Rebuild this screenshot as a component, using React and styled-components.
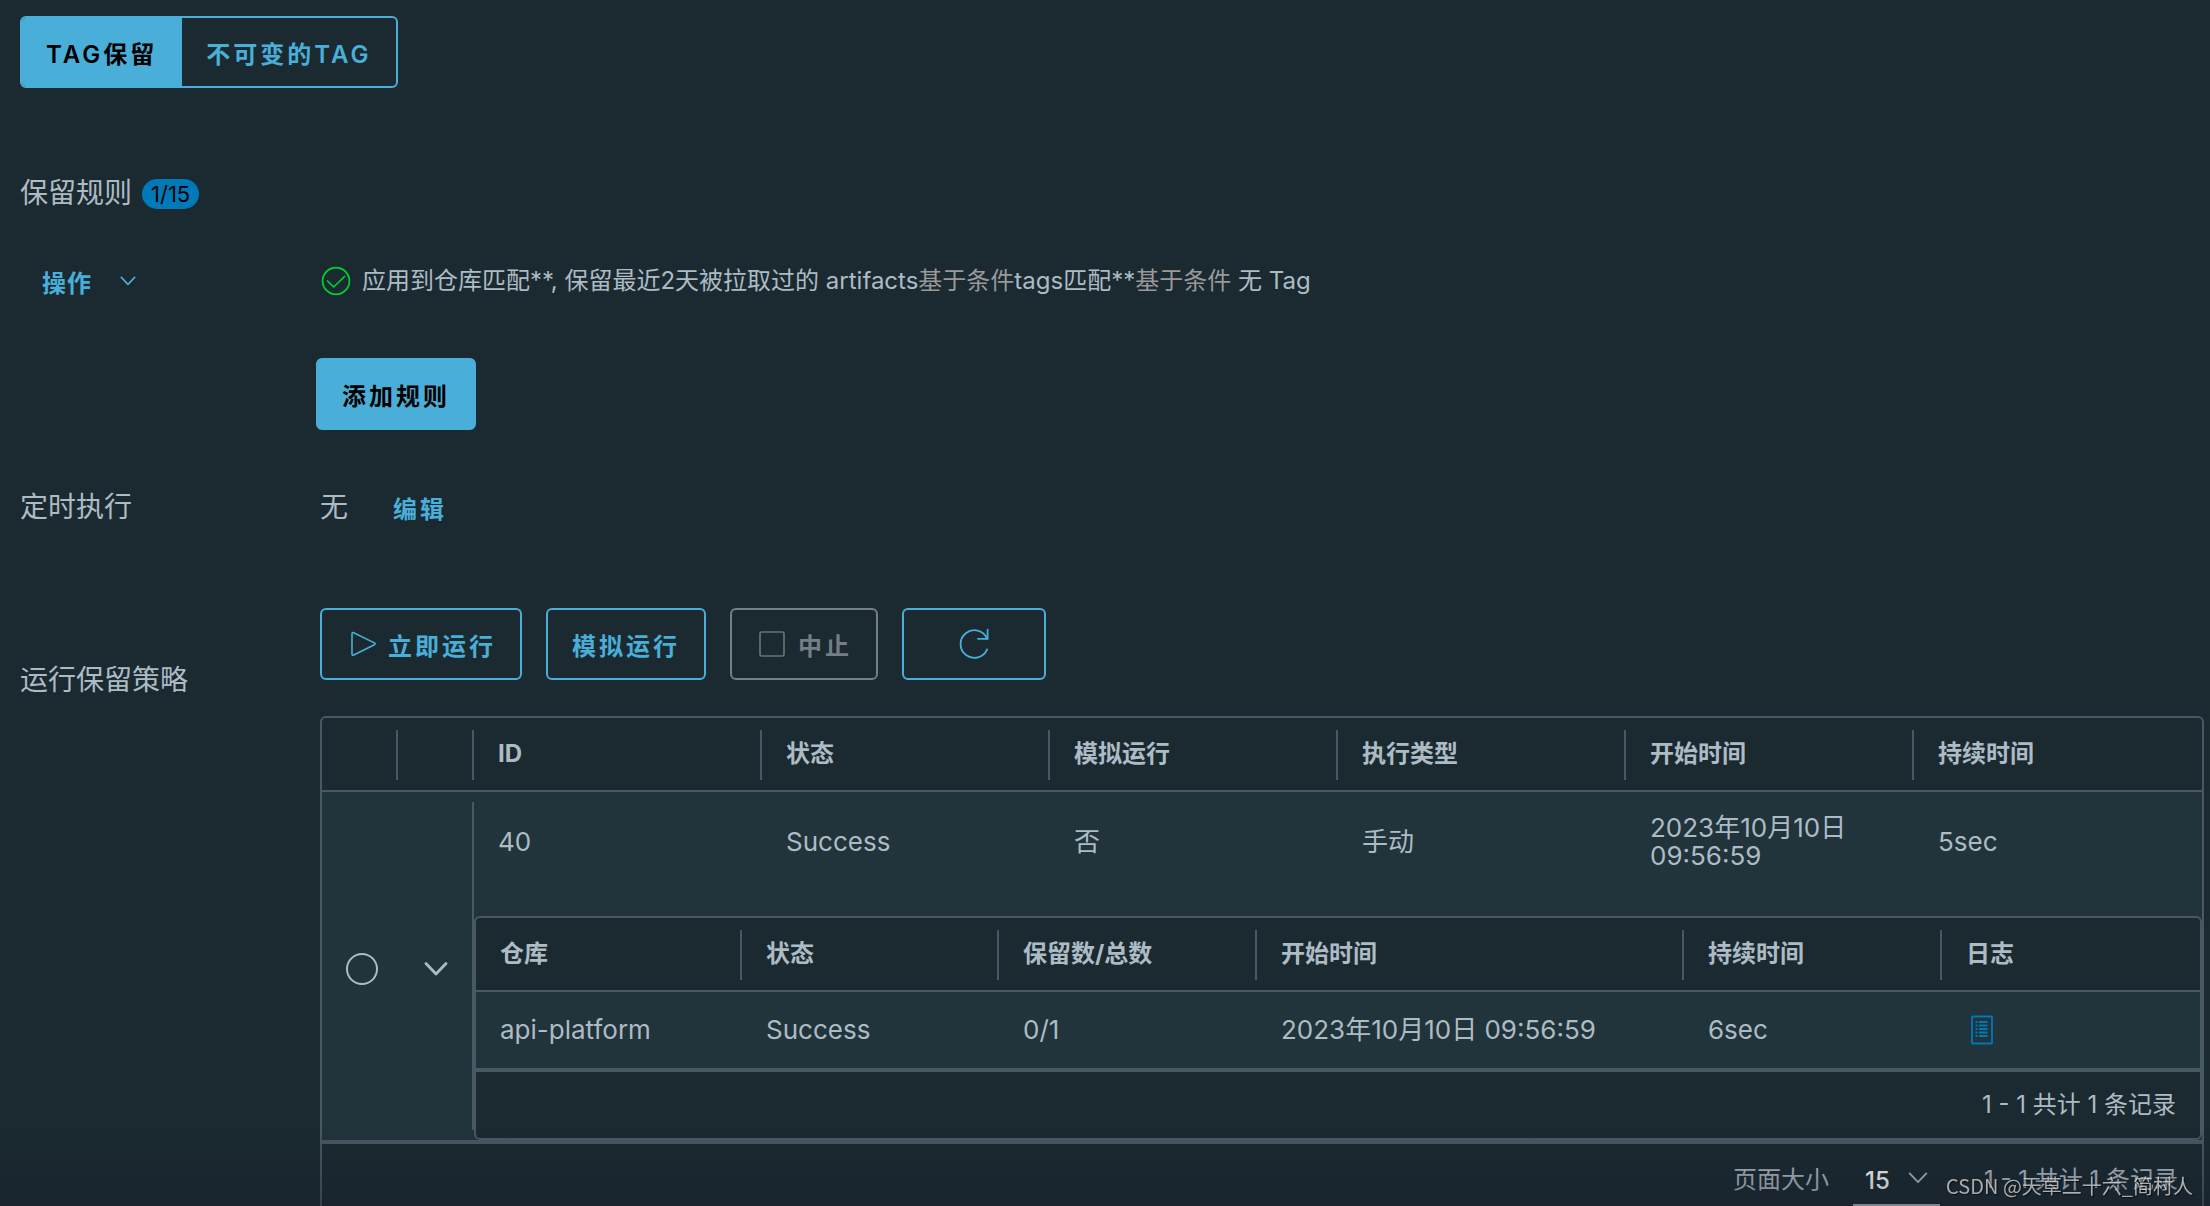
import React, { useState } from "react";
import styled, { createGlobalStyle } from "styled-components";

const ruleColumns = ["ID", "状态", "模拟运行", "执行类型", "开始时间", "持续时间"];

const taskColumns = [
  { name: "仓库", width: 266 },
  { name: "状态", width: 257 },
  { name: "保留数/总数", width: 258 },
  { name: "开始时间", width: 427 },
  { name: "持续时间", width: 258 },
  { name: "日志", width: 258 },
];

const taskTotal = taskColumns.reduce((sum, c) => sum + c.width, 0);

const execution = {
  id: "40",
  status: "Success",
  dryRun: "否",
  trigger: "手动",
  start: "2023年10月10日 09:56:59",
  duration: "5sec",
};

const task = {
  repo: "api-platform",
  status: "Success",
  count: "0/1",
  start: "2023年10月10日 09:56:59",
  duration: "6sec",
};

const AngleIcon = ({ size, weight }) => (
  <svg width={size} height={size} viewBox="0 0 24 24" fill="none" aria-hidden="true">
    <path
      d="M2 6.5 L12 17 L22 6.5"
      stroke="currentColor"
      strokeWidth={weight}
      strokeLinecap="round"
      strokeLinejoin="round"
    />
  </svg>
);

const CheckCircleIcon = () => (
  <svg width="30" height="30" viewBox="0 0 30 30" fill="none" aria-hidden="true">
    <circle cx="15" cy="15" r="13.4" stroke="#00d42e" strokeWidth="1.7" />
    <path
      d="M6.5 15 L12.7 21 L23.5 10.5"
      stroke="#00d42e"
      strokeWidth="1.7"
      strokeLinecap="round"
      strokeLinejoin="round"
    />
  </svg>
);

const PlayIcon = () => (
  <svg width="32" height="32" viewBox="0 0 32 32" fill="none" aria-hidden="true">
    <path
      d="M6 5.8 Q6 3.9 7.7 4.7 L28.4 14.9 Q30 15.8 28.4 16.7 L7.7 27 Q6 27.8 6 26 Z"
      stroke="currentColor"
      strokeWidth="1.6"
    />
  </svg>
);

const StopIcon = () => (
  <svg width="32" height="32" viewBox="0 0 32 32" fill="none" aria-hidden="true">
    <rect x="4" y="4" width="24" height="24" rx="1.5" stroke="currentColor" strokeWidth="1.7" opacity="0.85" />
  </svg>
);

const RefreshIcon = () => (
  <svg width="36" height="36" viewBox="0 0 36 36" fill="none" aria-hidden="true">
    <path
      d="M31.1 23.4 A13.8 13.8 0 1 1 31 12.5"
      stroke="currentColor"
      strokeWidth="1.8"
      strokeLinecap="round"
    />
    <path d="M31.6 3.6 V12.8 H22" stroke="currentColor" strokeWidth="1.8" strokeLinecap="round" />
  </svg>
);

const LogIcon = () => (
  <svg width="32" height="32" viewBox="0 0 32 32" fill="none" aria-hidden="true">
    <rect x="6" y="2.5" width="20" height="27" rx="1" stroke="currentColor" strokeWidth="1.8" />
    {[8, 11.5, 15, 18.5, 22].map((y) => (
      <path key={y} d={`M9.5 ${y} H11.5 M13 ${y} H21.5`} stroke="currentColor" strokeWidth="1.8" />
    ))}
  </svg>
);

const App = () => {
  const [tab, setTab] = useState("retention");
  const [pageSize, setPageSize] = useState("15");

  return (
    <Page>
      <GlobalStyle />
      <Tabs>
        <Tab $active={tab === "retention"} onClick={() => setTab("retention")}>
          TAG保留
        </Tab>
        <Tab $active={tab === "immutable"} onClick={() => setTab("immutable")}>
          不可变的TAG
        </Tab>
      </Tabs>

      <Heading>
        <Label>保留规则</Label>
        <Badge>1/15</Badge>
      </Heading>

      <Row $top={36}>
        <ActionButton>
          操作
          <AngleIcon size={16} weight={2.4} />
        </ActionButton>
        <Rule>
          <CheckCircleIcon />
          <RuleText>
            应用到仓库匹配**, 保留最近2天被拉取过的 artifacts<Muted>基于条件</Muted>tags匹配**
            <Muted>基于条件</Muted> 无 Tag
          </RuleText>
        </Rule>
      </Row>

      <Row $top={41}>
        <span />
        <div>
          <SolidButton>添加规则</SolidButton>
        </div>
      </Row>

      <Row $top={41}>
        <Label>定时执行</Label>
        <Schedule>
          <Label>无</Label>
          <LinkButton>编辑</LinkButton>
        </Schedule>
      </Row>

      <Row $top={65} $align="start">
        <RunLabel>运行保留策略</RunLabel>
        <Content>
          <Toolbar>
            <OutlineButton>
              <PlayIcon />
              立即运行
            </OutlineButton>
            <OutlineButton>模拟运行</OutlineButton>
            <OutlineButton disabled>
              <StopIcon />
              中止
            </OutlineButton>
            <RefreshButton aria-label="刷新">
              <RefreshIcon />
            </RefreshButton>
          </Toolbar>

          <DataGrid>
            <Table>
              <colgroup>
                <SideCol />
                <SideCol />
                {ruleColumns.map((name) => (
                  <col key={name} />
                ))}
              </colgroup>
              <thead>
                <tr>
                  <Th />
                  <Th />
                  {ruleColumns.map((name) => (
                    <Th key={name}>{name}</Th>
                  ))}
                </tr>
              </thead>
              <tbody>
                <tr>
                  <SelectCell rowSpan={2}>
                    <Radio type="radio" name="execution" aria-label="选择 40" />
                  </SelectCell>
                  <ExpandCell rowSpan={2}>
                    <ExpandButton aria-label="收起">
                      <AngleIcon size={24} weight={2.8} />
                    </ExpandButton>
                  </ExpandCell>
                  <ExecCell>{execution.id}</ExecCell>
                  <ExecCell>{execution.status}</ExecCell>
                  <ExecCell>{execution.dryRun}</ExecCell>
                  <ExecCell>{execution.trigger}</ExecCell>
                  <ExecCell>{execution.start}</ExecCell>
                  <ExecCell>{execution.duration}</ExecCell>
                </tr>
                <tr>
                  <DetailCell colSpan={6}>
                    <DataGrid>
                      <Table>
                        <colgroup>
                          {taskColumns.map((c) => (
                            <col key={c.name} style={{ width: `${(c.width / taskTotal) * 100}%` }} />
                          ))}
                        </colgroup>
                        <thead>
                          <tr>
                            {taskColumns.map((c) => (
                              <Th key={c.name}>{c.name}</Th>
                            ))}
                          </tr>
                        </thead>
                        <tbody>
                          <tr>
                            <TaskCell>{task.repo}</TaskCell>
                            <TaskCell>{task.status}</TaskCell>
                            <TaskCell>{task.count}</TaskCell>
                            <TaskCell>{task.start}</TaskCell>
                            <TaskCell>{task.duration}</TaskCell>
                            <TaskCell>
                              <LogLink href="#log" aria-label="日志">
                                <LogIcon />
                              </LogLink>
                            </TaskCell>
                          </tr>
                        </tbody>
                      </Table>
                      <Footer $height={68}>1 - 1 共计 1 条记录</Footer>
                    </DataGrid>
                  </DetailCell>
                </tr>
              </tbody>
            </Table>
            <Footer $height={74}>
              <PageSizeLabel htmlFor="page-size">页面大小</PageSizeLabel>
              <SelectBox>
                <Select id="page-size" value={pageSize} onChange={(e) => setPageSize(e.target.value)}>
                  <option>15</option>
                  <option>25</option>
                  <option>50</option>
                </Select>
                <SelectArrow>
                  <AngleIcon size={20} weight={2.2} />
                </SelectArrow>
              </SelectBox>
              1 - 1 共计 1 条记录
            </Footer>
          </DataGrid>
        </Content>
      </Row>
      <Shade />
      <Watermark>CSDN @天草二十六_简村人</Watermark>
    </Page>
  );
};

export default App;

const GlobalStyle = createGlobalStyle`
  * {
    box-sizing: border-box;
  }

  body {
    margin: 0;
    background: #1b2a31;
  }

  button, select, input {
    font-family: inherit;
    margin: 0;
  }
`;

const Page = styled.div`
  height: 100vh;
  overflow: hidden;
  padding: 16px 6px 0 20px;
  background: #1b2a31;
  color: #adbbc4;
  font-family: Inter, "Noto Sans CJK SC", sans-serif;
  font-size: 24px;
  line-height: 28px;
`;

const Tabs = styled.div`
  display: inline-flex;
  vertical-align: top;
  height: 72px;
  border: 2px solid #49afd9;
  border-radius: 6px;
  overflow: hidden;
`;

const Tab = styled.button`
  border: none;
  padding: 0 25px 0 24px;
  font-size: 24px;
  font-weight: 600;
  letter-spacing: 3px;
  white-space: nowrap;
  cursor: pointer;
  background: ${(props) => (props.$active ? "#49afd9" : "transparent")};
  color: ${(props) => (props.$active ? "#000" : "#49afd9")};
`;

const Heading = styled.div`
  display: flex;
  align-items: flex-start;
  gap: 10px;
  margin-top: 91px;
  height: 30px;
`;

const Label = styled.span`
  font-size: 28px;
  line-height: 28px;
`;

const Badge = styled.span`
  height: 30px;
  padding: 0 9px;
  border-radius: 15px;
  background: #0079b8;
  color: #000;
  font-size: 22px;
  line-height: 30px;
`;

const Row = styled.div`
  display: grid;
  grid-template-columns: 296px minmax(0, 1fr);
  align-items: ${(props) => props.$align || "center"};
  min-height: 72px;
  margin-top: ${(props) => props.$top}px;
`;

const ActionButton = styled.button`
  display: flex;
  align-items: center;
  gap: 28px;
  padding: 0 22px;
  border: none;
  background: none;
  color: #49afd9;
  font-size: 24px;
  font-weight: 700;
  letter-spacing: 1px;
  cursor: pointer;
`;

const Rule = styled.div`
  display: flex;
  align-items: center;
  gap: 11px;
  padding-left: 5px;
`;

const RuleText = styled.span`
  font-size: 24px;
`;

const Muted = styled.span`
  color: #999;
`;

const Button = styled.button`
  display: inline-flex;
  align-items: center;
  justify-content: center;
  gap: 10px;
  height: 72px;
  padding: 0 24px;
  border: 2px solid #49afd9;
  border-radius: 6px;
  font-size: 24px;
  font-weight: 600;
  letter-spacing: 3px;
  white-space: nowrap;
  cursor: pointer;
`;

const SolidButton = styled(Button)`
  vertical-align: top;
  background: #49afd9;
  color: #000;
`;

const OutlineButton = styled(Button)`
  background: transparent;
  color: #49afd9;

  &:disabled {
    border-color: #747e84;
    color: #747e84;
    cursor: default;
  }
`;

const RefreshButton = styled(OutlineButton)`
  width: 144px;
`;

const Schedule = styled.div`
  display: flex;
  align-items: center;
  gap: 45px;
  padding-left: 4px;
`;

const LinkButton = styled.button`
  padding: 0;
  border: none;
  background: none;
  color: #49afd9;
  font-size: 24px;
  font-weight: 700;
  letter-spacing: 3px;
  cursor: pointer;
`;

const RunLabel = styled(Label)`
  padding-top: 58px;
`;

const Content = styled.div`
  padding-left: 4px;
`;

const Toolbar = styled.div`
  display: flex;
  gap: 24px;
  margin-bottom: 36px;
`;

const DataGrid = styled.div`
  border: 2px solid #495865;
  border-radius: 6px;
  overflow: hidden;
  background: #1b2a31;
`;

const Table = styled.table`
  width: 100%;
  table-layout: fixed;
  border-collapse: separate;
  border-spacing: 0;
`;

const SideCol = styled.col`
  width: 76px;
`;

const Th = styled.th`
  height: 74px;
  padding: 0 24px;
  border-bottom: 2px solid #495865;
  background: linear-gradient(#495865, #495865) right top 12px / 2px 50px no-repeat;
  font-size: 24px;
  font-weight: 700;
  text-align: left;

  &:last-child {
    background: none;
  }
`;

const Td = styled.td`
  padding: 0 24px;
  background-color: #21333b;
  border-bottom: 2px solid #495865;
  font-size: 26px;
  line-height: 28px;
`;

const SelectCell = styled(Td)`
  padding: 6px 0 0 4px;
  text-align: center;
`;

const ExpandCell = styled(Td)`
  padding: 2px 0 0;
  text-align: center;
  background-image: linear-gradient(#495865, #495865);
  background-position: right center;
  background-size: 2px calc(100% - 20px);
  background-repeat: no-repeat;
`;

const ExecCell = styled(Td)`
  padding: 22px 24px 46px;
  border-bottom: none;
`;

const DetailCell = styled(Td)`
  padding: 0;
`;

const TaskCell = styled(Td)`
  height: 78px;
`;

const Radio = styled.input`
  appearance: none;
  display: inline-block;
  vertical-align: middle;
  width: 32px;
  height: 32px;
  border: 2px solid #adbbc4;
  border-radius: 50%;
`;

const ExpandButton = styled.button`
  display: inline-flex;
  vertical-align: middle;
  padding: 0;
  border: none;
  background: none;
  color: #adbbc4;
  cursor: pointer;
`;

const LogLink = styled.a`
  display: inline-flex;
  vertical-align: middle;
  color: #0079b8;
`;

const Footer = styled.div`
  display: flex;
  align-items: center;
  justify-content: flex-end;
  height: ${(props) => props.$height}px;
  padding: 0 24px;
  border-top: 2px solid #495865;
  font-size: 24px;
`;

const PageSizeLabel = styled.label`
  margin-right: 24px;
`;

const SelectBox = styled.span`
  position: relative;
  align-self: flex-end;
  width: 87px;
  margin-right: 44px;
  margin-bottom: 10px;
`;

const Select = styled.select`
  appearance: none;
  display: block;
  width: 100%;
  height: 50px;
  padding: 0 12px;
  border: none;
  border-bottom: 2px solid #adbbc4;
  border-radius: 0;
  background: transparent;
  color: #fff;
  font-size: 24px;
  font-weight: 500;
`;

const SelectArrow = styled.span`
  position: absolute;
  top: 12px;
  right: 12px;
  display: flex;
  pointer-events: none;
`;

const Shade = styled.div`
  position: fixed;
  left: 0;
  right: 0;
  bottom: 0;
  height: 76px;
  background: linear-gradient(rgba(24, 26, 40, 0), rgba(24, 26, 40, 0.35));
  pointer-events: none;
`;

const Watermark = styled.div`
  position: fixed;
  right: 17px;
  bottom: 6px;
  color: rgba(220, 220, 220, 0.75);
  font-family: "Noto Sans CJK SC", sans-serif;
  font-size: 20px;
  line-height: 28px;
  text-shadow: 1px 1px 1px rgba(0, 0, 0, 0.6);
  pointer-events: none;
`;
